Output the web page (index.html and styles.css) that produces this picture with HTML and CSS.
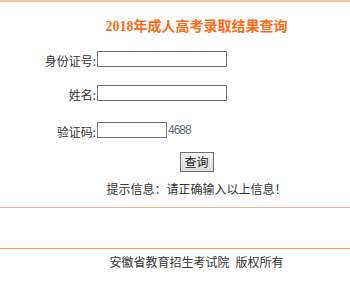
FILE: index.html
```html
<!DOCTYPE html>
<html lang="zh-CN">
<head>
<meta charset="utf-8">
<title>2018年成人高考录取结果查询</title>
<link rel="stylesheet" href="styles.css">
</head>
<body>
<div class="topline"></div>
<div class="page">
  <h1 class="title">2018年成人高考录取结果查询</h1>
  <form class="form">
    <div class="row row1">
      <label class="lbl">身份证号:</label>
      <input class="inp" type="text">
    </div>
    <div class="row row2">
      <label class="lbl">姓名:</label>
      <input class="inp" type="text">
    </div>
    <div class="row row3">
      <label class="lbl">验证码:</label>
      <div class="codebox"><input class="inp short" type="text"><span class="code">4688</span></div>
    </div>
    <div class="btnrow"><button class="btn" type="button">查询</button></div>
  </form>
  <p class="hint">提示信息：请正确输入以上信息！</p>
</div>
<div class="line1"></div>
<div class="line2"></div>
<p class="footer">安徽省教育招生考试院<span class="sp"></span>版权所有</p>
</body>
</html>
```

FILE: styles.css
```css
html, body {
  margin: 0;
  padding: 0;
  background: #ffffff;
}
body {
  font-family: "Liberation Serif", "Noto Sans CJK SC", serif;
  font-size: 12px;
  color: #333333;
}
.topline {
  height: 2px;
  background: #f9c3a1;
}
.page {
  padding-left: 43px;
}
.title {
  margin: 17px 0 0;
  font-size: 14px;
  line-height: 16px;
  font-weight: bold;
  color: #ff6a14;
  text-align: center;
}
.form {
  margin: 16px 0 0 -43px;
}
.row {
  display: grid;
  grid-template-columns: 97px auto;
  align-items: center;
  height: 16px;
}
.row2 { margin-top: 18px; }
.row3 { margin-top: 21px; }
.lbl {
  font-family: "Noto Sans CJK SC", sans-serif;
  font-size: 12px;
  line-height: 16px;
  color: #333333;
  text-align: right;
  padding-right: 1px;
  position: relative;
  top: 2px;
}
.inp {
  box-sizing: border-box;
  width: 130px;
  height: 16px;
  margin: 0;
  padding: 0;
  border: 1px solid #717171;
  background: #ffffff;
}
.codebox {
  display: flex;
  align-items: center;
}
.inp.short {
  width: 70px;
}
.code {
  margin-left: 1px;
  font-family: "Liberation Sans", sans-serif;
  font-size: 12px;
  letter-spacing: -1px;
  color: #5f6b7d;
  line-height: 16px;
}
.btnrow {
  margin-top: 14px;
  padding-left: 43px;
  text-align: center;
}
.btn {
  box-sizing: border-box;
  width: 34px;
  height: 20px;
  padding: 0;
  margin: 0;
  border: 1px solid #707070;
  background: linear-gradient(#f2f2f2, #dcdcdc);
  font-family: "Noto Sans CJK SC", sans-serif;
  font-size: 12px;
  line-height: 16px;
  color: #222222;
}
.hint {
  margin: 9px 0 0;
  font-family: "Noto Sans CJK SC", sans-serif;
  font-size: 12px;
  line-height: 16px;
  text-align: center;
  color: #333333;
}
.line1 {
  margin-top: 10px;
  height: 1px;
  background: #f8b792;
}
.line2 {
  margin-top: 40px;
  height: 1px;
  background: #fd925c;
}
.footer {
  margin: 5px 0 0;
  padding-left: 43px;
  font-family: "Noto Sans CJK SC", sans-serif;
  font-size: 12px;
  line-height: 16px;
  text-align: center;
  color: #333333;
}
.sp {
  display: inline-block;
  width: 6px;
}
```
